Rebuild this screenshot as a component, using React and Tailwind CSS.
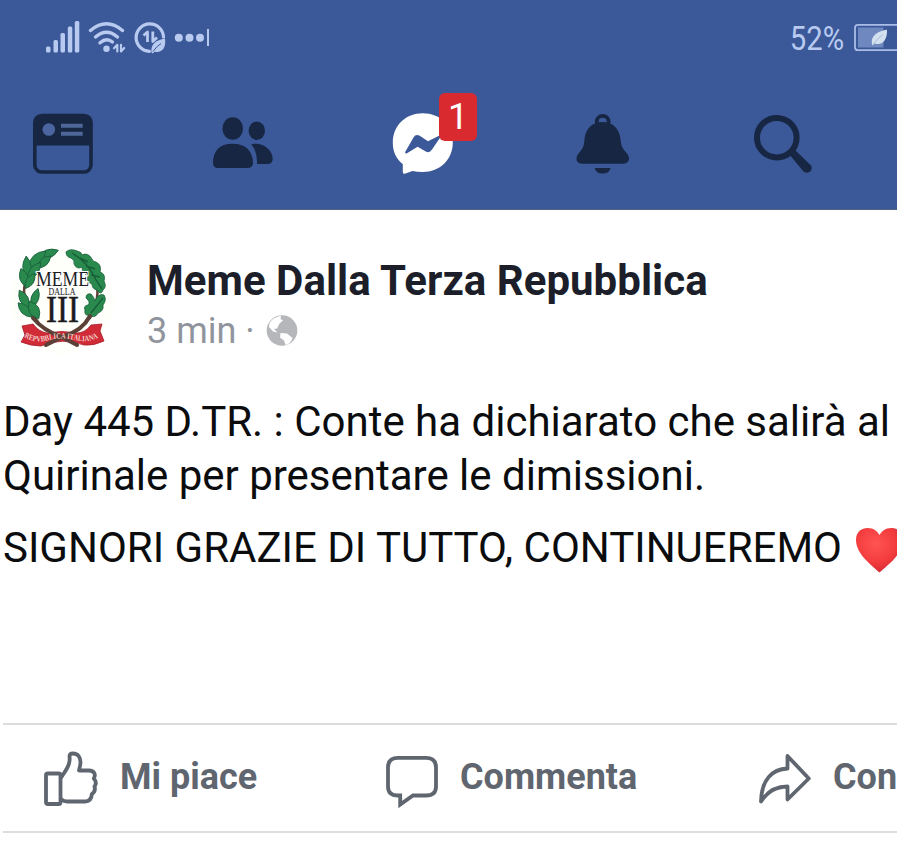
import React from "react";

const NAVY = "#172642";
const PALE = "#b9caf0";
const SLATE = "#5f666f";

function StatusIcons() {
  return (
    <svg className="block shrink-0" width="172" height="44" viewBox="42 16 172 44" fill={PALE}>
      <rect x="46" y="46.500" width="4.500" height="6" rx="1.500" />
      <rect x="53.500" y="40" width="4.500" height="12.500" rx="1.500" />
      <rect x="60.500" y="33" width="4.500" height="19.500" rx="1.500" />
      <rect x="67.800" y="26.500" width="4.500" height="26" rx="1.500" />
      <rect x="74.800" y="21" width="4.500" height="31.500" rx="1.500" />
      <g fill="none" stroke={PALE} strokeWidth="3.400" strokeLinecap="round">
        <path d="M90.500 30.500Q106.500 17 122.500 30.500" />
        <path d="M95.500 37Q106.500 27.500 117.500 37" />
        <path d="M100 42.800Q106.500 37.200 112.500 42" />
      </g>
      <circle cx="106.500" cy="48.700" r="3.200" />
      <g fill="none" stroke={PALE} strokeWidth="2.200" strokeLinecap="round" strokeLinejoin="round">
        <path d="M114 48.200L117.300 44.800V51.500M121 44.800V51.500L124.200 48" />
      </g>
      <g fill="none" stroke={PALE}>
        <path d="M149.500 51.300A13.700 13.700 0 1 1 163.500 37" strokeWidth="3.200" strokeLinecap="round" />
        <path d="M143.500 35.500L147.500 32V42M152.800 31.500V41.500L157 37.500" strokeWidth="2.800" strokeLinejoin="round" />
      </g>
      <path d="M151.500 52.500C150.500 44 156 40 165 38.500C166.500 48 161.500 53.500 154.500 51.700L152.800 53.500Z" />
      <path d="M153 51.500Q156.500 46.500 161 43.500" fill="none" stroke="#3b5998" strokeWidth="1" />
      <circle cx="178.800" cy="37.700" r="4" />
      <circle cx="189.500" cy="37.700" r="4" />
      <circle cx="200" cy="37.700" r="4" />
      <rect x="207" y="29" width="2" height="17" />
    </svg>
  );
}

function Battery() {
  return (
    <svg className="block shrink-0" width="44" height="32" viewBox="853 22 44 32">
      <rect x="855" y="24.800" width="60" height="25.400" rx="3" fill="none" stroke="#a9bde8" strokeWidth="1.800" />
      <rect x="858" y="27.500" width="25.500" height="20" fill="#6f88bf" />
      <path d="M872.500 45.500C869.500 37 877 31 887 29.800C887.500 40 882.500 46 874.500 43.500L872 46Z" fill="#d3e1ee" />
      <path d="M873 44.500Q878 38 883 34.500" fill="none" stroke="#a9bcdc" strokeWidth="1" />
    </svg>
  );
}

function FeedIcon() {
  return (
    <svg width="66" height="66" viewBox="30 111 66 66">
      <rect x="34.800" y="115.500" width="56.200" height="56.500" rx="7" fill="none" stroke={NAVY} strokeWidth="3.600" />
      <path d="M34 145.500V122Q34 115 41 115H85Q92 115 92 122V145.500Z" fill={NAVY} />
      <circle cx="48.800" cy="129.500" r="6.300" fill="#4a659f" />
      <path d="M61 125.700H82.700M61 133.700H82.700" stroke="#4e6799" strokeWidth="4" />
    </svg>
  );
}

function FriendsIcon() {
  return (
    <svg width="66" height="66" viewBox="210 111 66 66" fill={NAVY}>
      <ellipse cx="232.700" cy="128.500" rx="10.300" ry="11.200" />
      <ellipse cx="256.800" cy="130.700" rx="8.200" ry="9.200" />
      <path d="M213 163C213 151 219 143.700 232.500 143.700C246 143.700 253 151.500 253 163Q253 168 247 168H218Q213 168 213 163Z" />
      <path d="M251.300 144.300C263 141.700 272.700 150 272.700 159Q272.700 164 267 164H257Q257.300 151.500 251.300 144.300Z" />
    </svg>
  );
}

function MessengerIcon() {
  return (
    <svg width="66" height="66" viewBox="390 111 66 66">
      <path d="M422.700 113.200C405.700 113.200 392.800 125.500 392.800 142.500C392.800 152 396 158.500 402.800 164.200V172Q403 174.500 405.500 173.600L412.500 171Q417 172 422.700 172C440 172 452.800 159.500 452.800 142.500C452.800 125.500 440 113.200 422.700 113.200Z" fill="white" />
      <path d="M405.300 151.800L413.500 137.500Q415.800 133.800 419.300 135.600L428 141.200L440.500 135V137L432 149.500Q429.500 153.500 425.800 151.500L417.600 146.800L407 153.300Q404.500 154 405.300 151.800Z" fill="#3b5998" />
    </svg>
  );
}

function BellIcon() {
  return (
    <svg width="66" height="66" viewBox="570 111 66 66">
      <circle cx="602.700" cy="121.800" r="6" fill="none" stroke={NAVY} strokeWidth="3.800" />
      <path d="M602.500 122C613 122 619.500 129 620.500 139C621.200 146 622 147.500 626 152.300C631.500 158.500 629 163.700 623 163.700H582.500C576.500 163.700 574 158.500 579.500 152.300C583.500 147.500 583.900 146 584.500 139C585.500 129 592 122 602.500 122Z" fill={NAVY} />
      <path d="M594.700 168H610.500Q609.500 173.500 602.600 173.500Q595.700 173.500 594.700 168Z" fill={NAVY} />
    </svg>
  );
}

function SearchIcon() {
  return (
    <svg width="66" height="66" viewBox="750 111 66 66">
      <circle cx="776.800" cy="137.700" r="19.800" fill="none" stroke={NAVY} strokeWidth="6" />
      <path d="M789 154L794 149L811 165.500Q812.700 168.500 810.500 171.300Q807.500 174 803.500 171.500Z" fill={NAVY} />
    </svg>
  );
}

const LEAVES_LEFT = [
  [48, 254, 11, 5, -20],
  [37, 259, 12, 5.5, -42],
  [44, 262, 9, 4.5, -42],
  [27, 267, 11, 5, 86],
  [34, 271, 11, 5, -52],
  [24, 278, 10, 5, 72],
  [30, 281, 9, 4.5, -58],
  [24, 299, 10, 5, 62],
  [25, 310, 10, 5, 46],
  [35, 298, 10, 4.5, -72],
  [34, 310, 10, 6, 62],
];

function Avatar() {
  return (
    <svg className="-mt-px block shrink-0" width="110" height="110" viewBox="7 247 110 110">
      <circle cx="62" cy="302" r="52" fill="#fefefa" />
      <g fill="none" stroke="#5d3f33" strokeLinecap="round">
        <path d="M45 257Q24 272 24 292Q26 308 38 322" strokeWidth="2.500" />
        <path d="M92 270Q104 292 90 318" strokeWidth="2.500" />
      </g>
      <g fill="#2a8a4e" stroke="#185f3a" strokeWidth="0.800">
        {LEAVES_LEFT.map(([x, y, rx, ry, a], i) => (
          <path key={i} d={`M${x - rx} ${y}Q${x} ${y - ry * 1.7} ${x + rx} ${y}Q${x} ${y + ry * 1.7} ${x - rx} ${y}Z`} transform={`rotate(${a} ${x} ${y})`} />
        ))}
        <path d="M66 252Q70 248 77 251Q82 252 82 255Q88 252 92 259Q93 262 96 262Q102 265 100 272Q106 274 104 281Q107 287 103 290Q101 296 97 290Q92 289 92 284Q86 282 88 276Q82 273 82 267Q77 270 74 264Q75 260 71 258Q66 257 66 252Z" />
        <path d="M86 298Q86 293 91 294Q94 297 95 301Q98 293 104 295Q107 300 103 305Q104 311 98 313Q95 319 89 315Q84 316 85 310Q83 306 88 305Q91 302 86 298Z" />
      </g>
      <path d="M72 253Q88 262 96 280L102 289M80 258L88 262M86 266L95 269M91 275L100 277M103 298L91 313" fill="none" stroke="#175f37" strokeWidth="1.400" />
      <path d="M22 326L33 324Q39 332 47 333Q62 330 77 333Q85 333 91 325L102 324L100 331L104 341Q94 346 84 345Q62 337 41 346Q31 346 21 342L25 335Z" fill="#d02b36" stroke="#a51e2b" strokeWidth="0.800" />
      <g fill="none" stroke="#5b4038" strokeLinecap="round">
        <path d="M33 318Q44 331 60 336L77 345" strokeWidth="4" />
        <path d="M90 316Q82 331 64 336L46 345" strokeWidth="4" />
      </g>
      <path id="ribbon-line" d="M24 337Q34 343 45 341Q62 336 80 341Q91 342 102 336" fill="none" />
      <text fontSize="8" fontWeight="700" fill="#f4c9c4" fontFamily="Liberation Serif, serif">
        <textPath href="#ribbon-line" textLength="76" lengthAdjust="spacingAndGlyphs">REPVBBLICA ITALIANA</textPath>
      </text>
      <g fill="#1c1c1e" fontFamily="Liberation Serif, serif">
        <text x="36" y="286.300" fontSize="20" textLength="53" lengthAdjust="spacingAndGlyphs" stroke="white" strokeWidth="2" paintOrder="stroke">MEME</text>
        <text x="48.500" y="294.800" fontSize="9.500" textLength="27" lengthAdjust="spacingAndGlyphs">DALLA</text>
        <text x="46" y="322" fontSize="37" textLength="33" lengthAdjust="spacingAndGlyphs" stroke="#1c1c1e" strokeWidth="0.500">III</text>
      </g>
    </svg>
  );
}

function Globe() {
  return (
    <svg className="block shrink-0" width="32" height="32" viewBox="266 315 32 32">
      <circle cx="282" cy="330.500" r="15.300" fill="#b5b7ba" />
      <path d="M269.500 323Q273 317 281 315.800L280.500 319L283 320.500L279.500 323.500L277 328.500L274 329L277.500 332.500L273 331.500L269 327Z" fill="white" />
      <path d="M280.500 333L287 333.500L292.500 338Q290.500 344 285.500 345L284 340.500L280 337.500Z" fill="white" />
    </svg>
  );
}

function Heart() {
  return (
    <svg className="block shrink-0" width="50" height="52" viewBox="853 524 50 52">
      <defs>
        <radialGradient id="heart-fill" cx="0.420" cy="0.350" r="0.700">
          <stop offset="0" stopColor="#ff5452" />
          <stop offset="0.600" stopColor="#f33c3e" />
          <stop offset="1" stopColor="#cf2931" />
        </radialGradient>
      </defs>
      <path d="M879.500 572.500C874 567 856 555 856 540C856 531.500 862 528 867.500 528C874 528 877.500 531.500 879.500 535C881.500 531.500 885 528 891.500 528C897 528 903 531.500 903 540C903 555 885 567 879.500 572.500Z" fill="url(#heart-fill)" />
    </svg>
  );
}

const strokeProps = { fill: "none", stroke: SLATE, strokeWidth: 3.8, strokeLinejoin: "round", strokeLinecap: "round" };

function LikeIcon() {
  return (
    <svg className="mt-[4px] block shrink-0" width="60" height="60" viewBox="40 750 60 60" {...strokeProps}>
      <rect x="46" y="773.500" width="14.500" height="30.500" rx="1.800" />
      <path d="M61.500 777C64 773 68 768 69 763.500Q70 760 69.500 756.500Q69.500 753.500 73 753.500C78.500 753.500 80.500 758 80.500 762C80.500 765.500 79.500 768 79 770.500H89C94.500 770.500 96 775 93.800 778.500Q97.500 782.500 94.500 786.500Q96 791.500 91.800 794.200Q91.500 801.500 85 801.500H67Q64 801.500 61.500 799.500" />
    </svg>
  );
}

function CommentIcon() {
  return (
    <svg className="mt-[4px] block shrink-0" width="60" height="60" viewBox="382 750 60 60" {...strokeProps} strokeLinejoin="miter">
      <path d="M398 757.800H426Q436 757.800 436 767.500V786.500Q436 795.500 426 795.500H413L400.200 804.500V795.500H398Q388 795.500 388 786.500V767.500Q388 757.800 398 757.800Z" />
    </svg>
  );
}

function ShareIcon() {
  return (
    <svg className="mt-[4px] block shrink-0" width="60" height="60" viewBox="755 750 60 60" {...strokeProps}>
      <path d="M787.500 756L808.800 778.500L787.500 799.500V786.500C775 786.500 767 792 761 801.500C761.500 780 772 769 787.500 768.500Z" />
    </svg>
  );
}

function NavItem({ children }) {
  return <div className="flex w-[180px] shrink-0 justify-center">{children}</div>;
}

export default function App() {
  return (
    <div className="h-[847px] w-[897px] overflow-hidden bg-white font-[Roboto,sans-serif]">
      <header className="h-[210px] border-b border-[#52627f] bg-[#3b5998]">
        <div className="flex h-[76px] items-center justify-between pl-[42px]">
          <StatusIcons />
          <div className="flex items-center">
            <span className="mr-[9px] origin-right scale-x-[0.86] text-[34px] leading-[44px] text-[#b9caf0]">52%</span>
            <Battery />
          </div>
        </div>
        <nav className="-ml-[27px] flex pt-[35px]">
          <NavItem><FeedIcon /></NavItem>
          <NavItem><FriendsIcon /></NavItem>
          <NavItem>
            <div className="relative">
              <MessengerIcon />
              <span className="absolute -top-[18px] left-[49px] flex h-[48px] w-[38px] items-center justify-center rounded-[6px] bg-[#d92b2f] text-[36px] leading-none text-white">1</span>
            </div>
          </NavItem>
          <NavItem><BellIcon /></NavItem>
          <NavItem><SearchIcon /></NavItem>
        </nav>
      </header>

      <main>
        <div className="flex h-[185px] pl-[7px] pt-[38px]">
          <Avatar />
          <div className="ml-[29px] pt-[8px]">
            <h1 className="whitespace-nowrap pl-px text-[42px] font-bold leading-[50px] tracking-[0.03px] text-[#1c1f2a]">Meme Dalla Terza Repubblica</h1>
            <div className="flex h-[50px] items-center pl-px text-[36px] leading-[50px] text-[#90949c]">
              <span className="mr-[11px] whitespace-nowrap">3 min ·</span>
              <Globe />
            </div>
          </div>
        </div>

        <div className="h-[328px] whitespace-nowrap text-[42px] leading-[54px] text-[#0b0c0e]">
          <p className="pl-[3px]">Day 445 D.TR. : Conte ha dichiarato che salirà al</p>
          <p className="pl-[3px]">Quirinale per presentare le dimissioni.</p>
          <div className="mt-[17px] flex items-center">
            <p className="w-[853px] shrink-0 pl-[3px]">SIGNORI GRAZIE DI TUTTO, CONTINUEREMO</p>
            <div className="pt-[4px]"><Heart /></div>
          </div>
        </div>

        <footer className="ml-[3px] flex h-[110px] items-center border-y-2 border-[#dcddde] pl-[37px] text-[36px] font-bold leading-[44px] text-[#5f666f]">
          <div className="flex w-[342px] shrink-0 items-center">
            <LikeIcon />
            <span className="-mt-[3px] ml-[20px] whitespace-nowrap">Mi piace</span>
          </div>
          <div className="flex w-[373px] shrink-0 items-center">
            <CommentIcon />
            <span className="-mt-[3px] ml-[18px] whitespace-nowrap">Commenta</span>
          </div>
          <div className="flex shrink-0 items-center">
            <ShareIcon />
            <span className="-mt-[3px] ml-[18px] whitespace-nowrap">Condividi</span>
          </div>
        </footer>
      </main>
    </div>
  );
}
